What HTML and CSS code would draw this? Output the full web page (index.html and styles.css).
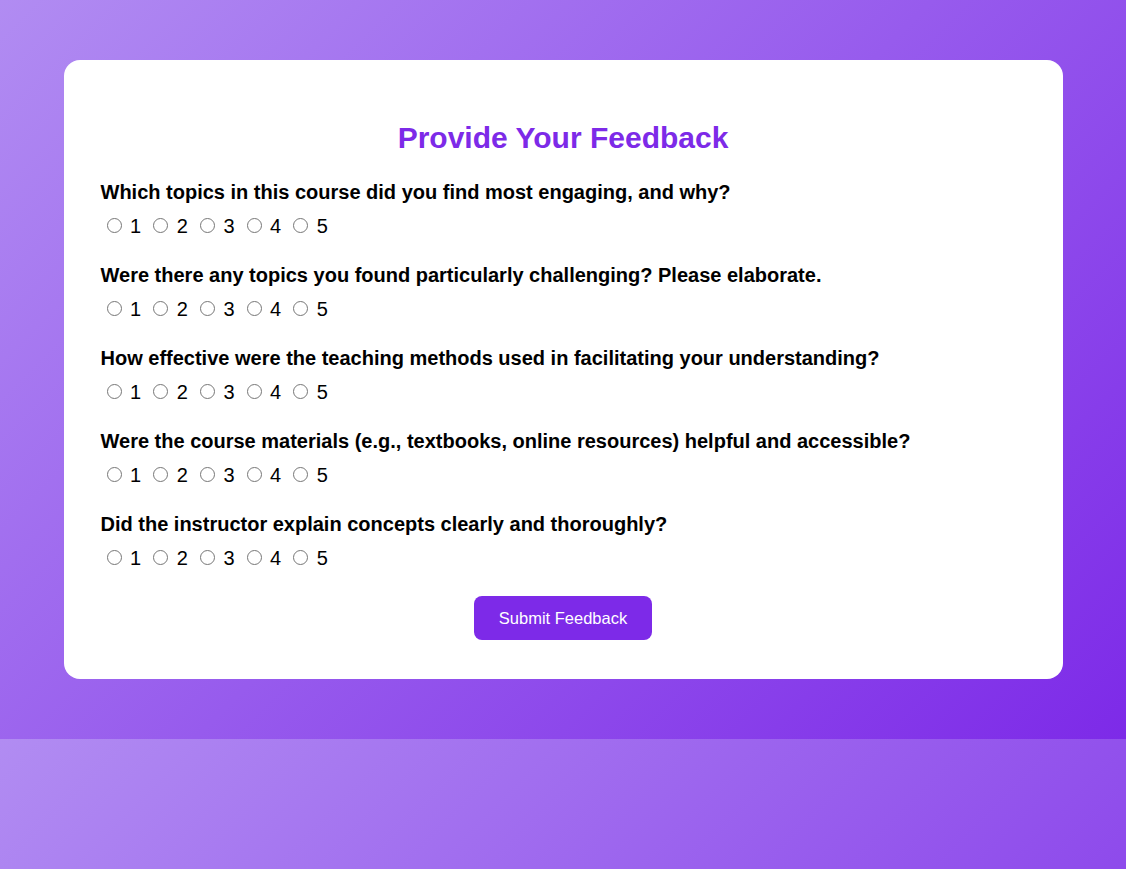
FILE: index.html
```html
<!DOCTYPE html>
<html lang="en">
<head>
<meta charset="utf-8">
<title>Provide Your Feedback</title>
<link rel="stylesheet" href="styles.css">
</head>
<body>
<div class="card">
  <h2 class="title">Provide Your Feedback</h2>
  <form class="form">
    <div class="question">
      <label class="q-label">Which topics in this course did you find most engaging, and why?</label>
      <div class="options">
        <label class="opt"><input type="radio" name="q1" value="1"> 1</label>
        <label class="opt"><input type="radio" name="q1" value="2"> 2</label>
        <label class="opt"><input type="radio" name="q1" value="3"> 3</label>
        <label class="opt"><input type="radio" name="q1" value="4"> 4</label>
        <label class="opt"><input type="radio" name="q1" value="5"> 5</label>
      </div>
    </div>
    <div class="question">
      <label class="q-label">Were there any topics you found particularly challenging? Please elaborate.</label>
      <div class="options">
        <label class="opt"><input type="radio" name="q2" value="1"> 1</label>
        <label class="opt"><input type="radio" name="q2" value="2"> 2</label>
        <label class="opt"><input type="radio" name="q2" value="3"> 3</label>
        <label class="opt"><input type="radio" name="q2" value="4"> 4</label>
        <label class="opt"><input type="radio" name="q2" value="5"> 5</label>
      </div>
    </div>
    <div class="question">
      <label class="q-label">How effective were the teaching methods used in facilitating your understanding?</label>
      <div class="options">
        <label class="opt"><input type="radio" name="q3" value="1"> 1</label>
        <label class="opt"><input type="radio" name="q3" value="2"> 2</label>
        <label class="opt"><input type="radio" name="q3" value="3"> 3</label>
        <label class="opt"><input type="radio" name="q3" value="4"> 4</label>
        <label class="opt"><input type="radio" name="q3" value="5"> 5</label>
      </div>
    </div>
    <div class="question">
      <label class="q-label">Were the course materials (e.g., textbooks, online resources) helpful and accessible?</label>
      <div class="options">
        <label class="opt"><input type="radio" name="q4" value="1"> 1</label>
        <label class="opt"><input type="radio" name="q4" value="2"> 2</label>
        <label class="opt"><input type="radio" name="q4" value="3"> 3</label>
        <label class="opt"><input type="radio" name="q4" value="4"> 4</label>
        <label class="opt"><input type="radio" name="q4" value="5"> 5</label>
      </div>
    </div>
    <div class="question">
      <label class="q-label">Did the instructor explain concepts clearly and thoroughly?</label>
      <div class="options">
        <label class="opt"><input type="radio" name="q5" value="1"> 1</label>
        <label class="opt"><input type="radio" name="q5" value="2"> 2</label>
        <label class="opt"><input type="radio" name="q5" value="3"> 3</label>
        <label class="opt"><input type="radio" name="q5" value="4"> 4</label>
        <label class="opt"><input type="radio" name="q5" value="5"> 5</label>
      </div>
    </div>
    <div class="actions">
      <button type="button" class="submit">Submit Feedback</button>
    </div>
  </form>
</div>
</body>
</html>
```
FILE: styles.css
```css
html {
  margin: 0;
}
body {
  margin: 0;
  padding: 60px 0;
  font-family: "Liberation Sans", Arial, sans-serif;
  background: linear-gradient(135deg, #b18cf2 0%, #7d2ae8 100%);
  color: #000;
}
.card {
  max-width: 999px;
  margin: 0 auto;
  background: #fff;
  border-radius: 16px;
  padding: 40px 37px 39px 37px;
  box-sizing: border-box;
}
.title {
  margin: 21px 0 26px;
  text-align: center;
  font-size: 30px;
  font-weight: bold;
  color: #7d2ae8;
}
.form {
  margin: 0;
}
.question {
  margin-bottom: 26px;
}
.q-label {
  display: block;
  font-size: 20px;
  font-weight: bold;
  margin-bottom: 11px;
}
.options {
  display: flex;
  font-size: 20px;
  padding-left: 1px;
}
.opt {
  margin-right: 7px;
}
.opt input {
  width: 15px;
  height: 15px;
  margin: 3px 3px 0 5px;
}
.actions {
  display: flex;
  justify-content: center;
}
.submit {
  background: #7d2ae8;
  color: #fff;
  border: none;
  border-radius: 8px;
  font-family: "Liberation Sans", Arial, sans-serif;
  font-size: 16.5px;
  line-height: 18px;
  padding: 13px 25px;
  cursor: pointer;
}
```
